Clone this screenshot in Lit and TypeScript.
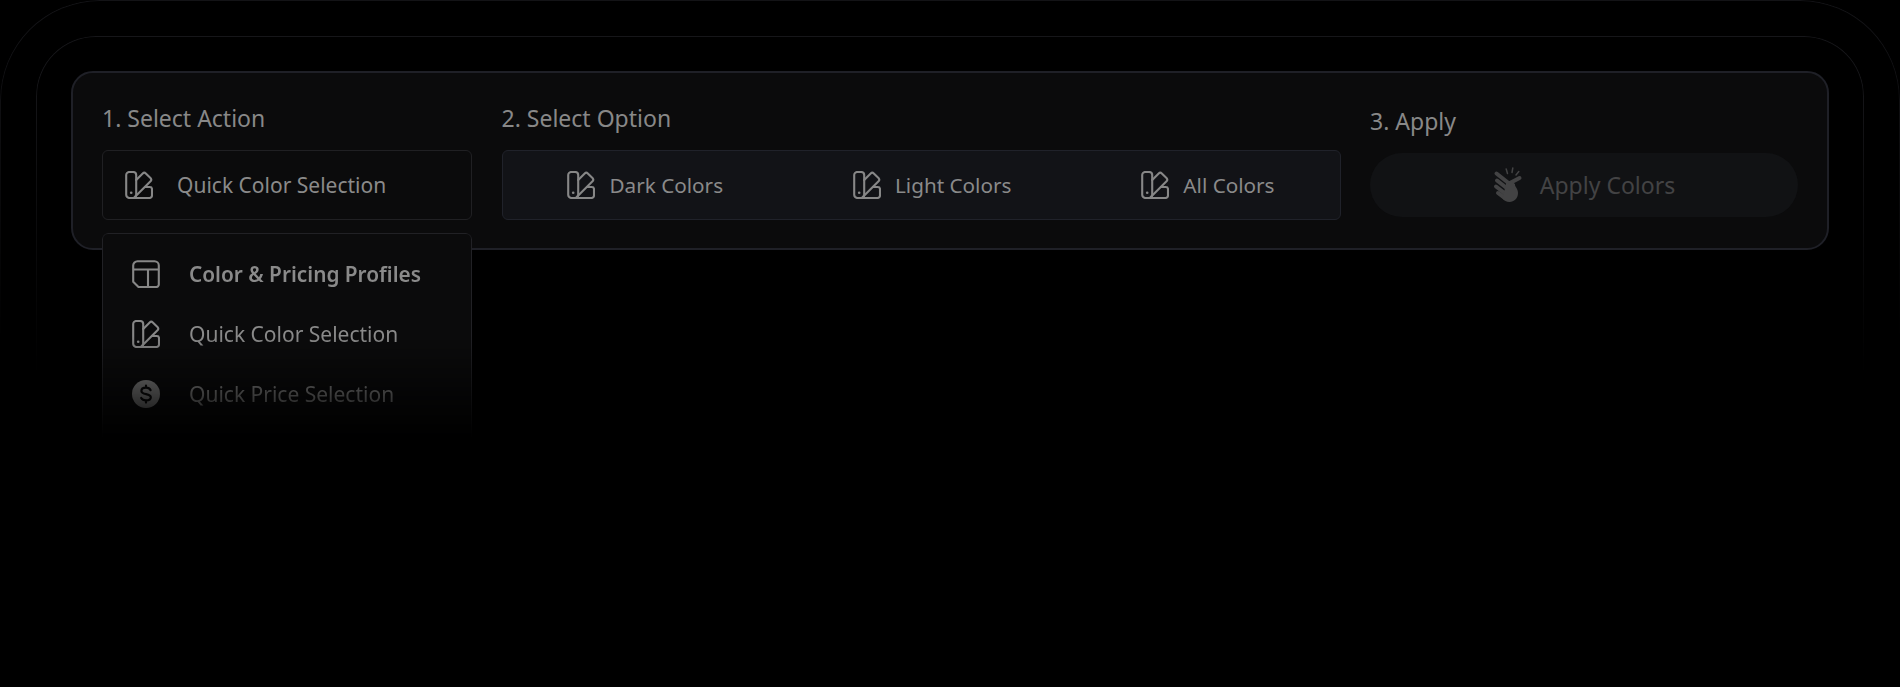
import { LitElement, html, css, svg } from "lit";
import { customElement } from "lit/decorators.js";

const swatch = svg`<svg class="ic" viewBox="0 0 28 28" fill="none" stroke="currentColor" stroke-width="2.100" stroke-linejoin="round" stroke-linecap="round">
  <path d="M1.200 4a3 3 0 0 1 3-3h4a3 3 0 0 1 3 3v19.800a3.200 3.200 0 0 1-3.200 3.200H4.400a3.200 3.200 0 0 1-3.200-3.200z"/>
  <path d="M11.200 9l6.500-6.500a2.200 2.200 0 0 1 3.100 0l4.700 4.600a2.200 2.200 0 0 1 0 3.100L10 25.800"/>
  <path d="M20 16h4.800a2.200 2.200 0 0 1 2.200 2.200v6.300a2.500 2.500 0 0 1-2.500 2.500H7"/>
  <circle cx="6.200" cy="21.800" r="1.300" fill="currentColor" stroke="none"/>
</svg>`;

const layout = svg`<svg class="ic" viewBox="0 0 28 28" fill="none" stroke="currentColor" stroke-width="2.100" stroke-linejoin="round">
  <path d="M5.500 1.200h17a4.300 4.300 0 0 1 4.300 4.300v19a2.500 2.500 0 0 1-2.500 2.500H6.500l-5.300-5.300V5.500a4.300 4.300 0 0 1 4.300-4.300z"/>
  <path d="M1.200 9.500h25.600M16 9.500V27"/>
</svg>`;

const dollar = svg`<svg class="ic" viewBox="0 0 28 28">
  <circle cx="14" cy="14" r="14" fill="currentColor"/>
  <path d="M18.600 10.200c-.7-1.500-2.500-2.500-4.600-2.500-2.700 0-4.600 1.300-4.600 3.200 0 4.400 9.400 1.900 9.400 6.400 0 2-2 3.100-4.800 3.100-2.200 0-4-.9-4.800-2.400M14 5.500v2.200M14 20.400v2.200" fill="none" stroke="#0b0b0c" stroke-width="2.200" stroke-linecap="round"/>
</svg>`;

const snap = svg`<svg class="snap" viewBox="0 0 30 36" fill="none" stroke="currentColor" stroke-linecap="round">
  <g stroke-width="1.500">
    <path d="M14.500 6.500l-1.300-4.500M19 5.500l.8-4.500M23 8l2.800-3.400"/>
  </g>
  <g stroke-width="4">
    <path d="M3.500 6.500l12 9.500M15 17l11.500-6M4 13.500l9 7M3 19.500l8.500 6.500M5 26l6 4.500"/>
  </g>
  <path d="M13 17l6-2.500 3 2.500c-.5 3 3 4 3 9 0 5.500-4 9-8.500 9-3 0-5.500-1.500-7-3.500z" fill="currentColor" stroke="none"/>
</svg>`;

@customElement("app-root")
export class AppRoot extends LitElement {
  static styles = css`
    :host {
      display: block;
      height: 687px;
      overflow: hidden;
      background: #000;
      font-family: "Noto Sans", "Open Sans", sans-serif;
      color: #8a8a8a;
    }
    .ring {
      position: relative;
      padding: 36px;
    }
    .ring::before {
      content: "";
      position: absolute;
      inset: 0 0 auto 0;
      height: 400px;
      border: 1px solid #131316;
      border-bottom: 0;
      border-radius: 100px 100px 0 0;
      -webkit-mask-image: linear-gradient(#000 10%, transparent 85%);
      mask-image: linear-gradient(#000 10%, transparent 85%);
      pointer-events: none;
    }
    .ring.inner {
      padding: 35px;
    }
    .ring.inner::before {
      border-radius: 60px 60px 0 0;
      border-color: #161619;
    }
    .panel {
      position: relative;
      display: grid;
      grid-template-columns: 370px 839px 428px;
      column-gap: 29.5px;
      box-sizing: border-box;
      height: 179px;
      padding: 31px 29px 0 29px;
      background: #0b0b0c;
      border: 2px solid #1f2027;
      border-radius: 22px;
    }
    .col {
      position: relative;
      display: flex;
      flex-direction: column;
      min-width: 0;
    }
    .label {
      font-size: 23px;
      line-height: 28px;
      height: 28px;
      margin-bottom: 18px;
      color: #888;
    }
    .col.apply .label {
      margin-top: 3px;
    }
    .box {
      box-sizing: border-box;
      height: 70px;
      border-radius: 6px;
      display: flex;
      align-items: center;
      font-size: 21px;
      color: #8a8a8a;
    }
    .select {
      border: 1px solid #202023;
      padding-left: 22px;
      gap: 24px;
    }
    .opts {
      border: 1px solid #20222a;
      background: #121317;
      justify-content: space-around;
      font-size: 20.7px;
    }
    .opt {
      display: flex;
      align-items: center;
      gap: 14px;
    }
    .ic {
      width: 28px;
      height: 28px;
      flex: none;
      color: #878787;
    }
    .btn {
      height: 64px;
      border-radius: 32px;
      background: #111214;
      display: flex;
      align-items: center;
      justify-content: center;
      gap: 17px;
      font-size: 23px;
      color: #434344;
    }
    .snap {
      width: 30px;
      height: 36px;
      flex: none;
      color: #434344;
    }
    .menu {
      position: absolute;
      top: 129px;
      left: 0;
      right: 0;
      height: 205px;
      box-sizing: border-box;
      padding: 25px 0 0 29px;
      background: #0b0b0c;
      border: 1px solid #212125;
      border-radius: 6px 6px 0 0;
      display: flex;
      flex-direction: column;
      gap: 30px;
      -webkit-mask-image: linear-gradient(#000 50%, transparent 100%);
      mask-image: linear-gradient(#000 50%, transparent 100%);
    }
    .item {
      display: flex;
      align-items: center;
      gap: 29px;
      height: 30px;
      font-size: 21px;
      color: #8a8a8a;
    }
    .item.bold { font-weight: 600; font-size: 20.8px; }
  `;

  render() {
    return html`
      <div class="ring">
        <div class="ring inner">
          <div class="panel">
            <div class="col">
              <div class="label">1. Select Action</div>
              <div class="box select">${swatch}<span>Quick Color Selection</span></div>
              <div class="menu">
                <div class="item bold">${layout}<span>Color &amp; Pricing Profiles</span></div>
                <div class="item">${swatch}<span>Quick Color Selection</span></div>
                <div class="item">${dollar}<span>Quick Price Selection</span></div>
              </div>
            </div>
            <div class="col">
              <div class="label">2. Select Option</div>
              <div class="box opts">
                <div class="opt">${swatch}<span>Dark Colors</span></div>
                <div class="opt">${swatch}<span>Light Colors</span></div>
                <div class="opt">${swatch}<span>All Colors</span></div>
              </div>
            </div>
            <div class="col apply">
              <div class="label">3. Apply</div>
              <div class="btn">${snap}<span>Apply Colors</span></div>
            </div>
          </div>
        </div>
      </div>
    `;
  }
}
